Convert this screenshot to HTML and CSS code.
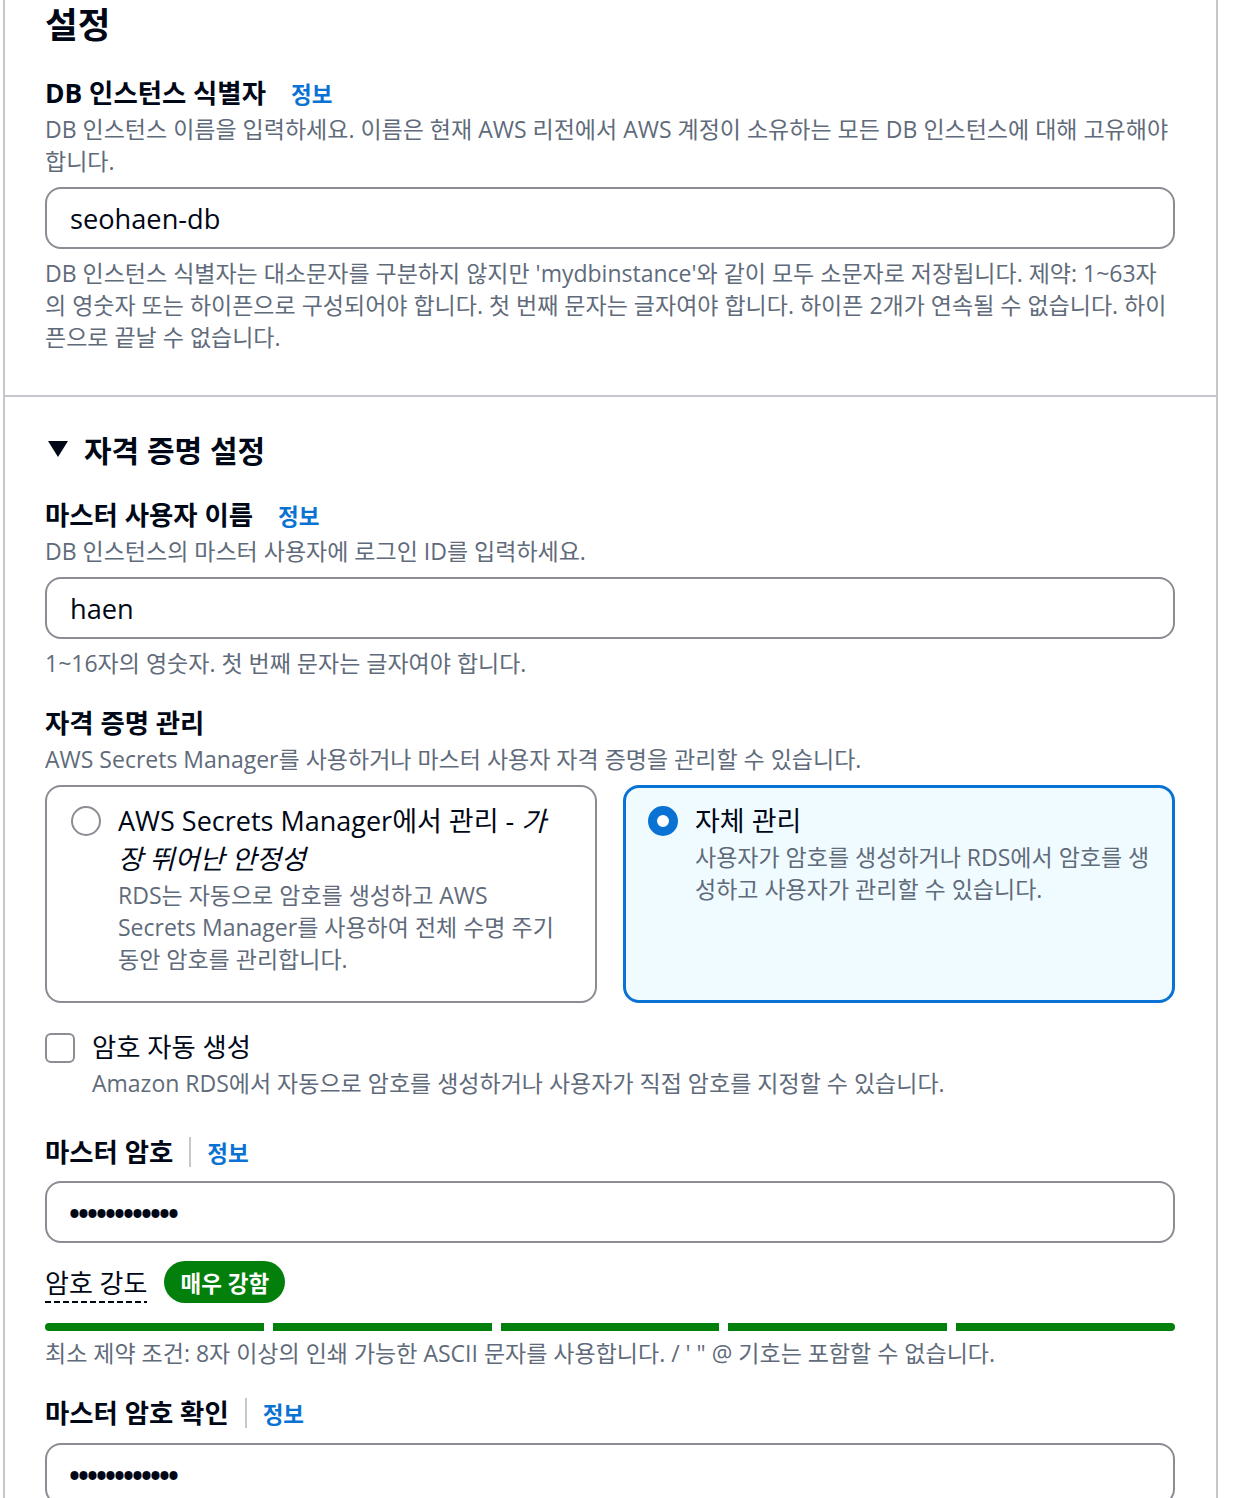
FILE: index.html
```html
<!DOCTYPE html>
<html lang="ko">
<head>
<meta charset="utf-8">
<title>설정</title>
<link rel="stylesheet" href="styles.css">
</head>
<body>
<div class="panel">
  <section class="sec sec-first">
    <h2 class="title">설정</h2>
    <div class="field f-first">
      <div class="label-row"><span class="label">DB 인스턴스 식별자</span><a class="info">정보</a></div>
      <div class="desc nw">DB 인스턴스 이름을 입력하세요. 이름은 현재 AWS 리전에서 AWS 계정이 소유하는 모든 DB 인스턴스에 대해 고유해야<br>합니다.</div>
      <div class="input">seohaen-db</div>
      <div class="hint nw">DB 인스턴스 식별자는 대소문자를 구분하지 않지만 'mydbinstance'와 같이 모두 소문자로 저장됩니다. 제약: 1~63자<br>의 영숫자 또는 하이픈으로 구성되어야 합니다. 첫 번째 문자는 글자여야 합니다. 하이픈 2개가 연속될 수 없습니다. 하이<br>픈으로 끝날 수 없습니다.</div>
    </div>
  </section>

  <section class="sec sec-cred">
    <h3 class="exp-head"><svg class="caret" width="20" height="16" viewBox="0 0 20 16"><polygon points="0,0 20,0 10,16"/></svg>자격 증명 설정</h3>

    <div class="field f-user">
      <div class="label-row"><span class="label">마스터 사용자 이름</span><a class="info">정보</a></div>
      <div class="desc">DB 인스턴스의 마스터 사용자에 로그인 ID를 입력하세요.</div>
      <div class="input">haen</div>
      <div class="hint">1~16자의 영숫자. 첫 번째 문자는 글자여야 합니다.</div>
    </div>

    <div class="field f-manage">
      <div class="label-row"><span class="label">자격 증명 관리</span></div>
      <div class="desc">AWS Secrets Manager를 사용하거나 마스터 사용자 자격 증명을 관리할 수 있습니다.</div>
      <div class="tiles">
        <div class="tile">
          <span class="radio"></span>
          <div class="tile-body">
            <div class="tile-title nw">AWS Secrets Manager에서 관리 - <em>가<br>장 뛰어난 안정성</em></div>
            <div class="tile-desc nw">RDS는 자동으로 암호를 생성하고 AWS<br>Secrets Manager를 사용하여 전체 수명 주기<br>동안 암호를 관리합니다.</div>
          </div>
        </div>
        <div class="tile tile-on">
          <span class="radio radio-on"></span>
          <div class="tile-body">
            <div class="tile-title">자체 관리</div>
            <div class="tile-desc nw">사용자가 암호를 생성하거나 RDS에서 암호를 생<br>성하고 사용자가 관리할 수 있습니다.</div>
          </div>
        </div>
      </div>
    </div>

    <div class="check-row">
      <span class="checkbox"></span>
      <div class="check-body">
        <div class="check-label">암호 자동 생성</div>
        <div class="desc">Amazon RDS에서 자동으로 암호를 생성하거나 사용자가 직접 암호를 지정할 수 있습니다.</div>
      </div>
    </div>

    <div class="field f-pass">
      <div class="label-row"><span class="label">마스터 암호</span><span class="vsep"></span><a class="info info-sep">정보</a></div>
      <div class="input input-pw"><span class="dots">••••••••••••</span></div>
      <div class="strength">
        <span class="strength-label">암호 강도</span>
        <span class="badge">매우 강함</span>
      </div>
      <div class="bars">
        <span class="bar"></span><span class="bar"></span><span class="bar"></span><span class="bar"></span><span class="bar"></span>
      </div>
      <div class="hint hint-tight">최소 제약 조건: 8자 이상의 인쇄 가능한 ASCII 문자를 사용합니다. / ' " @ 기호는 포함할 수 없습니다.</div>
    </div>

    <div class="field f-confirm">
      <div class="label-row"><span class="label">마스터 암호 확인</span><span class="vsep"></span><a class="info info-sep">정보</a></div>
      <div class="input input-pw"><span class="dots">••••••••••••</span></div>
    </div>
  </section>
</div>
</body>
</html>
```

FILE: styles.css
```css
html, body {
  margin: 0;
  padding: 0;
  background: #ffffff;
}

body {
  font-family: "Open Sans", "Noto Sans CJK KR", sans-serif;
  color: #000716;
}

.panel {
  margin-left: 3px;
  width: 1215px;
  box-sizing: border-box;
  border-left: 2px solid #c6c6cd;
  border-right: 2px solid #c6c6cd;
  min-height: 1498px;
}

.sec {
  padding: 0 41px 0 40px;
}

.sec-first {
  padding-bottom: 42px;
  border-bottom: 2px solid #c6c6cd;
}

.title {
  margin: 0;
  font-size: 35.5px;
  line-height: 48px;
  font-weight: 700;
}

.nw {
  white-space: nowrap;
}

.f-first {
  margin-top: 25px;
}

.label-row {
  display: flex;
  align-items: center;
  height: 40px;
}

.label {
  font-size: 26.4px;
  line-height: 40px;
  font-weight: 700;
}

.info {
  color: #0972d3;
  font-size: 22.5px;
  font-weight: 700;
  margin-left: 25px;
  text-decoration: none;
}

.info-sep {
  margin-left: 0;
}

.vsep {
  width: 2px;
  height: 30px;
  background: #c6c6cd;
  margin: 0 16px 0 16px;
}

.desc {
  font-size: 23px;
  line-height: 32px;
  color: #5f6b7a;
}

.input {
  margin-top: 10px;
  height: 62px;
  box-sizing: border-box;
  border: 2px solid #8c8c94;
  border-radius: 16px;
  padding: 0 23px;
  display: flex;
  align-items: center;
  font-size: 27.2px;
  color: #000716;
}

.hint {
  margin-top: 8px;
  font-size: 23px;
  line-height: 32px;
  color: #5f6b7a;
}

.sec-cred {
  padding-top: 32px;
}

.exp-head {
  margin: 0;
  display: flex;
  align-items: center;
  height: 40px;
  font-size: 30px;
  font-weight: 700;
}

.caret {
  margin-left: 3px;
  margin-right: 16px;
  fill: #000716;
}

.f-user {
  margin-top: 26px;
}

.f-manage {
  margin-top: 24px;
}

.tiles {
  margin-top: 10px;
  display: grid;
  grid-template-columns: 1fr 1fr;
  gap: 26px;
}

.tile {
  height: 218px;
  box-sizing: border-box;
  border: 2px solid #8c8c94;
  border-radius: 16px;
  padding: 15px 14px 0 24px;
  display: flex;
  align-items: flex-start;
  gap: 17px;
}

.tile-on {
  border: 3px solid #0972d3;
  background: #f0fbff;
  padding: 14px 13px 0 22px;
}

.radio {
  flex: none;
  width: 30px;
  height: 30px;
  box-sizing: border-box;
  border-radius: 50%;
  border: 2px solid #8c8c94;
  background: #ffffff;
  margin-top: 4px;
}

.radio-on {
  border: 9px solid #0972d3;
}

.tile-title {
  font-size: 27px;
  line-height: 38px;
  color: #000716;
}

.tile-title em {
  font-style: italic;
}

.tile-desc {
  margin-top: 1px;
  font-size: 23px;
  line-height: 32px;
  color: #5f6b7a;
}

.check-row {
  margin-top: 24px;
  display: flex;
  align-items: flex-start;
  gap: 17px;
}

.checkbox {
  flex: none;
  width: 30px;
  height: 30px;
  box-sizing: border-box;
  border: 2px solid #8c8c94;
  border-radius: 6px;
  margin-top: 6px;
  background: #ffffff;
}

.check-label {
  font-size: 26.3px;
  line-height: 40px;
  color: #000716;
}

.f-pass {
  margin-top: 33px;
}

.f-pass .input {
  margin-top: 9px;
}

.input-pw {
  padding-left: 22px;
}

.dots {
  font-size: 29px;
  font-weight: 700;
  letter-spacing: -1.9px;
  color: #000716;
  font-family: "Open Sans", sans-serif;
}

.strength {
  margin-top: 18px;
  height: 42px;
  display: flex;
  align-items: center;
}

.strength-label {
  font-size: 26px;
  line-height: 32px;
  padding-bottom: 4px;
  margin-top: 6px;
  background-image: repeating-linear-gradient(to right, #000716 0 6px, transparent 6px 9px);
  background-size: 100% 2px;
  background-repeat: no-repeat;
  background-position: left bottom;
}

.badge {
  margin-left: 17px;
  height: 42px;
  padding: 0 16px;
  border-radius: 21px;
  background: #037f0c;
  color: #ffffff;
  font-size: 22.5px;
  font-weight: 700;
  display: flex;
  align-items: center;
}

.bars {
  margin-top: 20px;
  display: flex;
  gap: 9px;
  height: 8px;
}

.bar {
  flex: 1;
  background: #037f0c;
}

.bar:first-child {
  border-radius: 4px 0 0 4px;
}

.bar:last-child {
  border-radius: 0 4px 4px 0;
}

.hint-tight {
  margin-top: 6px;
}

.f-confirm {
  margin-top: 24px;
}
```
